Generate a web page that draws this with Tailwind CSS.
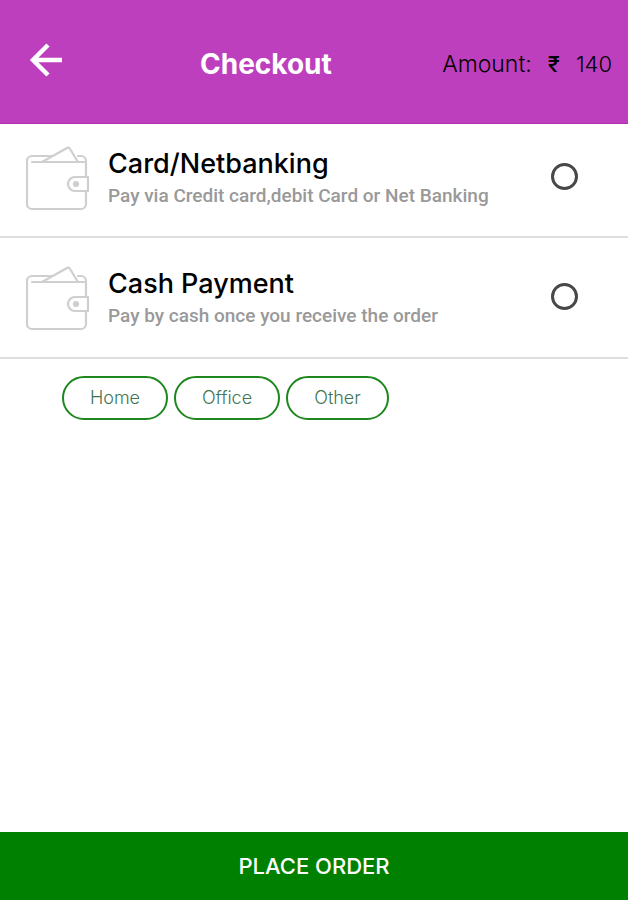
<!DOCTYPE html>
<html lang="en">
<head>
    <meta charset="utf-8"/>
    <meta content="width=device-width, initial-scale=1.0" name="viewport"/>
    <title>Checkout</title>
    <script src="https://cdn.jsdelivr.net/npm/@tailwindcss/browser@4"></script>
</head>
<body class="flex flex-col min-h-screen bg-white font-['Inter','Noto_Sans',sans-serif] text-black">
    <svg class="hidden">
        <symbol id="wallet" viewBox="0 0 64 66" fill="none" stroke="#cfcfcf" stroke-width="2.200" stroke-linecap="round" stroke-linejoin="round">
            <path d="M60 31V15a5 5 0 0 0-5-5h-3M26 10H6a5 5 0 0 0-5 5v43a5 5 0 0 0 5 5h49a5 5 0 0 0 5-5V45"/>
            <path d="M6 16h52M16 16L41 2q2-1 3 1l8 13"/>
            <path d="M62 31H49a7 7 0 0 0 0 14h13z"/>
            <circle cx="50" cy="38" r="2" fill="#cfcfcf"/>
        </symbol>
    </svg>

    <!-- Header -->
    <header class="flex items-center h-[124px] pl-[26px] pr-4 bg-[#be3fbe] border-b border-[#b42db4]">
        <button type="button" aria-label="Back" class="text-white mb-1">
            <svg class="w-10 h-10" viewBox="0 0 40 40" fill="none" stroke="currentColor" stroke-width="4.500">
                <path d="M36 20H8M22 5L7 20l15 15"/>
            </svg>
        </button>
        <h1 class="ml-[134px] text-[28px] leading-8 font-bold text-white pt-1">Checkout</h1>
        <div class="flex items-center ml-auto text-[23px] leading-8 font-light pt-1">
            <span>Amount:</span>
            <span class="ml-4 text-[22px] font-medium">₹</span>
            <span class="ml-4 text-[22px]">140</span>
        </div>
    </header>

    <main class="grow">
        <!-- Payment methods -->
        <label class="flex items-center pt-[22px] pb-6 pl-[26px] pr-[50px] border-b-2 border-[#dedede] cursor-pointer">
            <svg class="w-16 h-[66px] shrink-0"><use href="#wallet"/></svg>
            <span class="grow ml-[18px] pt-0.5">
                <span class="block text-[27px] leading-8 font-medium">Card/Netbanking</span>
                <span class="block font-['Roboto','Noto_Sans',sans-serif] text-[19px] leading-8 font-medium text-[#999999]">Pay via Credit card,debit Card or Net Banking</span>
            </span>
            <input type="radio" name="payment" value="card" class="appearance-none size-[27px] mb-1.5 shrink-0 rounded-full border-3 border-[#484848] checked:bg-[#484848]"/>
        </label>
        <label class="flex items-center pt-7 pb-[25px] pl-[26px] pr-[50px] border-b-2 border-[#dedede] cursor-pointer">
            <svg class="w-16 h-[66px] shrink-0"><use href="#wallet"/></svg>
            <span class="grow ml-[18px] pt-0.5">
                <span class="block text-[27px] leading-8 font-medium">Cash Payment</span>
                <span class="block font-['Roboto','Noto_Sans',sans-serif] text-[19px] leading-8 font-medium text-[#999999]">Pay by cash once you receive the order</span>
            </span>
            <input type="radio" name="payment" value="cash" class="appearance-none size-[27px] mb-1.5 shrink-0 rounded-full border-3 border-[#484848] checked:bg-[#484848]"/>
        </label>

        <!-- Delivery address -->
        <div class="flex gap-1.5 mt-[17px] ml-[62px] text-[18px] font-light text-[#3f7553]">
            <button type="button" class="w-[106px] h-11 pb-0.5 rounded-full border-2 border-[#1c871c]">Home</button>
            <button type="button" class="w-[106px] h-11 pb-0.5 rounded-full border-2 border-[#1c871c]">Office</button>
            <button type="button" class="w-[103px] h-11 pb-0.5 rounded-full border-2 border-[#1c871c]">Other</button>
        </div>
    </main>

    <button type="button" class="w-full h-[68px] bg-[#008000] text-white text-[22px] font-medium">PLACE ORDER</button>
</body>
</html>
